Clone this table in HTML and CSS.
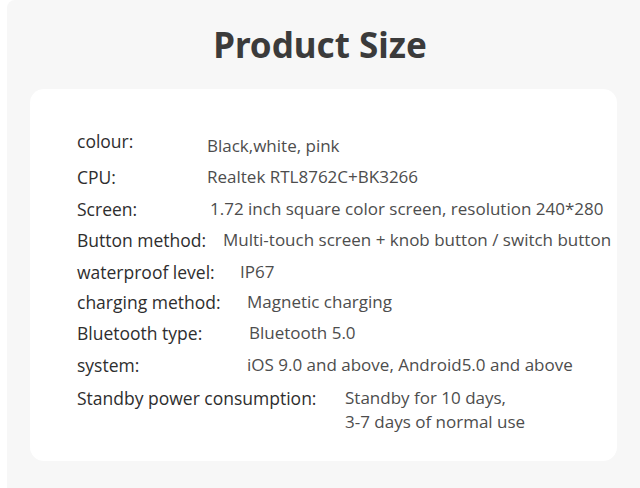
FILE: index.html
```html
<!DOCTYPE html>
<html>
<head>
<meta charset="utf-8">
<link rel="stylesheet" href="styles.css">
</head>
<body>
<div class="panel">
  <h1 class="title">Product Size</h1>
  <div class="card">
    <div class="row r1"><span class="label l1">colour:</span><span class="value v-low">Black,white, pink</span></div>
    <div class="row"><span class="label l1">CPU:</span><span class="value">Realtek RTL8762C+BK3266</span></div>
    <div class="row"><span class="label l2">Screen:</span><span class="value">1.72 inch square color screen, resolution 240*280</span></div>
    <div class="row"><span class="label l3">Button method:</span><span class="value">Multi-touch screen + knob button / switch button</span></div>
    <div class="row r5"><span class="label l4">waterproof level:</span><span class="value">IP67</span></div>
    <div class="row"><span class="label l5">charging method:</span><span class="value">Magnetic charging</span></div>
    <div class="row"><span class="label l6">Bluetooth type:</span><span class="value">Bluetooth 5.0</span></div>
    <div class="row"><span class="label l5">system:</span><span class="value">iOS 9.0 and above, Android5.0 and above</span></div>
    <div class="row r9"><span class="label l7">Standby power consumption:</span><span class="value">Standby for 10 days,<br>3-7 days of normal use</span></div>
  </div>
</div>
</body>
</html>
```
FILE: styles.css
```css
html, body {
  margin: 0;
  padding: 0;
  background: #ffffff;
}
.panel {
  margin-left: 7px;
  height: 488px;
  background: #f7f7f7;
  border-top-left-radius: 8px;
  padding-top: 22px;
  box-sizing: border-box;
  overflow: hidden;
}
.title {
  margin: 0;
  text-align: center;
  font-family: "Noto Sans", sans-serif;
  font-weight: 700;
  font-size: 35px;
  line-height: 46px;
  color: #3b3b3b;
  padding-right: 7px;
}
.card {
  margin: 21px 0 0 23px;
  width: 587px;
  height: 372px;
  background: #ffffff;
  border-radius: 14px;
  box-sizing: border-box;
  padding: 40px 0 0 47px;
}
.row {
  display: flex;
  align-items: flex-start;
  font-family: "Open Sans", sans-serif;
  line-height: 24px;
  height: 31.5px;
}
.r1 { height: 36px; }
.r5 { height: 30px; }
.r9 { margin-top: 2px; }
.label {
  flex: none;
  color: #2e2e2e;
  font-size: 17.5px;
}
.value {
  color: #4d4d4d;
  font-size: 17px;
}
.v-low { position: relative; top: 5px; }
.l1 { width: 130px; }
.l2 { width: 133px; }
.l3 { width: 146px; }
.l4 { width: 163px; }
.l5 { width: 170px; }
.l6 { width: 172px; }
.l7 { width: 268px; }
```
